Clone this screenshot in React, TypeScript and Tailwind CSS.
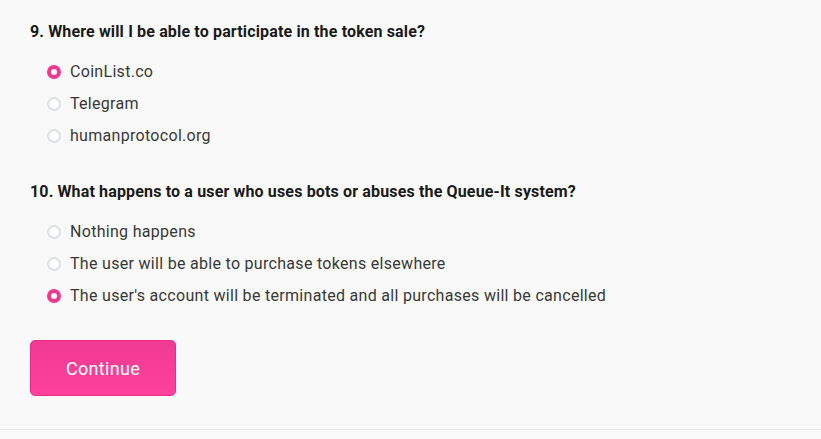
import React, { useState } from "react";

const questions = [
  {
    n: "9.",
    q: "Where will I be able to participate in the token sale?",
    options: ["CoinList.co", "Telegram", "humanprotocol.org"],
    selected: 0,
  },
  {
    n: "10.",
    q: "What happens to a user who uses bots or abuses the Queue-It system?",
    options: [
      "Nothing happens",
      "The user will be able to purchase tokens elsewhere",
      "The user's account will be terminated and all purchases will be cancelled",
    ],
    selected: 2,
  },
];

function Radio({ checked }: { checked: boolean }) {
  return checked ? (
    <span className="w-[14px] h-[14px] rounded-full border-[4px] border-[#f2378f] bg-white shrink-0" />
  ) : (
    <span className="w-[14px] h-[14px] rounded-full border-[2px] border-[#dcdfe6] bg-white shrink-0" />
  );
}

export default function App() {
  const [sel, setSel] = useState(questions.map((q) => q.selected));
  return (
    <div className="w-[821px] h-[439px] bg-[#f9f9f9] flex flex-col font-['Roboto',sans-serif]">
      <div className="flex-1 pl-[30px] pt-[22px] flex flex-col">
        {questions.map((q, qi) => (
          <div key={qi} className={qi > 0 ? "mt-[30px]" : ""}>
            <div className="flex text-[16px] font-bold text-[#1a1a1a] leading-[20px] tracking-[0.15px]">
              <span className="mr-[4px]">{q.n}</span>
              <span>{q.q}</span>
            </div>
            <div className="mt-[14px] pl-[17px] flex flex-col">
              {q.options.map((o, oi) => (
                <label
                  key={oi}
                  className="h-[32px] flex items-center gap-[9px] cursor-pointer"
                  onClick={() => setSel((s) => s.map((v, i) => (i === qi ? oi : v)))}
                >
                  <Radio checked={sel[qi] === oi} />
                  <span className="text-[16px] text-[#383838] leading-[20px] tracking-[0.3px]">{o}</span>
                </label>
              ))}
            </div>
          </div>
        ))}
        <button className="mt-[28px] w-[146px] h-[56px] rounded-[5px] border border-[#ee2b8a] bg-gradient-to-b from-[#f03a92] to-[#ff429c] text-white text-[18px] font-normal tracking-[0.3px]">
          Continue
        </button>
      </div>
      <div className="h-[10px] border-t border-[#e6e6e6] bg-[#fafafa]" />
    </div>
  );
}
